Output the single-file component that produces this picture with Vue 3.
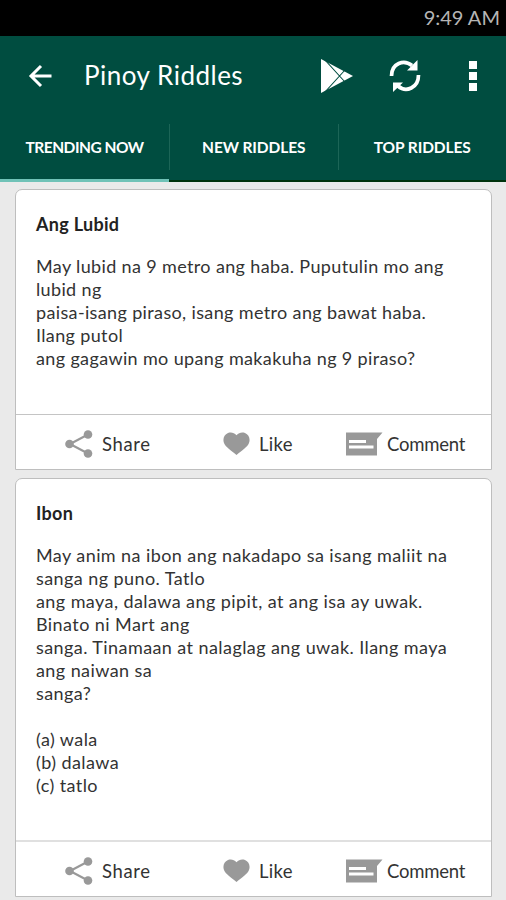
<template>
  <div class="screen">
    <div class="status-bar">9:49 AM</div>
    <header>
      <div class="toolbar">
        <svg class="back" width="24" height="24" viewBox="0 0 24 24">
          <path d="M13 2 L3 12 L13 22 M3 12 H23.500" fill="none" stroke="#fff" stroke-width="3" />
        </svg>
        <h1>Pinoy Riddles</h1>
        <svg class="play" width="34" height="34" viewBox="0 0 34 34">
          <path d="M1 0 L33 17 L1 34 Z" fill="#fff" />
          <path d="M4 0 L25 23 M4 34 L25 11" fill="none" stroke="#004d40" stroke-width="1.100" />
        </svg>
        <svg class="refresh" width="32" height="34" viewBox="0 0 32 34">
          <path d="M2.500 17 C2.500 4 15 0 23 6.500 M29.500 16 C29.500 29 17 34 9 27" fill="none" stroke="#fff" stroke-width="3.700" />
          <path d="M28.500 1 V11.500 H18 Z M4 33 V23.500 H14 Z" fill="#fff" />
        </svg>
        <svg class="more" width="8" height="30" viewBox="0 0 8 30">
          <path d="M0 0 H8 V8 H0 Z M0 11 H8 V19 H0 Z M0 22 H8 V30 H0 Z" fill="#fff" />
        </svg>
      </div>
      <nav class="tabs">
        <button
          v-for="tab in tabs"
          :key="tab"
          :class="{ active: tab === activeTab }"
          @click="activeTab = tab"
        >
          <span>{{ tab }}</span>
        </button>
      </nav>
    </header>
    <main>
      <article v-for="riddle in riddles" :key="riddle.id" class="card">
        <div class="card-body">
          <h2>{{ riddle.title }}</h2>
          <p>{{ riddle.text }}</p>
        </div>
        <div class="actions">
          <button class="share">
            <svg width="28" height="28" viewBox="0 0 28 28">
              <path d="M23 4.500 L5 14 L23 23.500" fill="none" stroke="#999" stroke-width="2.200" />
              <circle cx="23" cy="4.500" r="4.300" />
              <circle cx="4.500" cy="14" r="4.300" />
              <circle cx="23" cy="23.500" r="4.300" />
            </svg>
            <span>Share</span>
          </button>
          <button class="like" @click="riddle.liked = !riddle.liked">
            <svg width="27" height="24" viewBox="0 0 27 24">
              <path d="M13.500 3.200 C16 0.500 19 0 22 1 C26 2.500 27.500 7 26 11 C24.500 15 19 18.500 13.500 23 C8 18.500 2.500 15 1 11 C-0.500 7 1 2.500 5 1 C8 0 11 0.500 13.500 3.200 Z" />
            </svg>
            <span>Like</span>
          </button>
          <button class="comment">
            <svg width="37" height="24" viewBox="0 0 37 24">
              <path d="M0 0.500 H36.500 L31 7 V23.500 H0 Z" />
              <path d="M3 8 H20 V11 H3 Z M3 13.500 H27.500 V16.500 H3 Z" fill="#fff" />
            </svg>
            <span>Comment</span>
          </button>
        </div>
      </article>
    </main>
  </div>
</template>

<script setup>
import { ref } from "vue";

const tabs = ["TRENDING NOW", "NEW RIDDLES", "TOP RIDDLES"];
const activeTab = ref("TRENDING NOW");

const riddles = ref([
  {
    id: 1,
    title: "Ang Lubid",
    text: `May lubid na 9 metro ang haba. Puputulin mo ang
lubid ng
paisa-isang piraso, isang metro ang bawat haba.
Ilang putol
ang gagawin mo upang makakuha ng 9 piraso?`,
    liked: false,
  },
  {
    id: 2,
    title: "Ibon",
    text: `May anim na ibon ang nakadapo sa isang maliit na
sanga ng puno. Tatlo
ang maya, dalawa ang pipit, at ang isa ay uwak.
Binato ni Mart ang
sanga. Tinamaan at nalaglag ang uwak. Ilang maya
ang naiwan sa
sanga?

(a) wala
(b) dalawa
(c) tatlo`,
    liked: false,
  },
]);
</script>

<style>
body {
  background: #eaeaea;
}
</style>

<style scoped>
.screen {
  height: 900px;
  overflow: hidden;
  background: #eaeaea;
  font-family: "Choco cooky", Lato, sans-serif;
}

button {
  padding: 0;
  border: none;
  background: transparent;
  font-family: inherit;
  cursor: pointer;
}

.status-bar {
  height: 36px;
  line-height: 35px;
  padding-right: 6px;
  background: #000;
  color: #b5b5b5;
  font-size: 20px;
  text-align: right;
}

header {
  height: 146px;
  background: #004d40;
}

.toolbar {
  display: flex;
  align-items: center;
  height: 79px;
  padding: 0 29px 0 28px;
}

h1 {
  flex: 1;
  margin: 0 0 2px 32px;
  color: #fff;
  font-size: 26px;
  font-weight: 400;
  letter-spacing: 0.5px;
}

.refresh {
  margin: 0 48px 0 35px;
}

.tabs {
  display: flex;
  height: 67px;
}

.tabs button {
  flex: 1;
  padding: 9px 0 10px;
  border-bottom: 2px solid #00330d;
  color: #fff;
  font-size: 15.500px;
  font-weight: 700;
  letter-spacing: -0.1px;
  white-space: nowrap;
}

.tabs button.active {
  flex: 0 0 169px;
  padding-bottom: 9px;
  border-bottom: 3px solid #70c2b7;
  letter-spacing: -0.5px;
}

.tabs span {
  display: block;
  height: 46px;
  line-height: 46px;
}

.tabs button + button span {
  border-left: 1px solid #1c6557;
}

main {
  padding: 7px 14px 0 15px;
}

.card {
  margin-bottom: 8px;
  border: 1px solid #bebebe;
  border-radius: 7px 7px 0 0;
  background: #fff;
}

.card-body {
  padding: 22px 20px 44px;
}

h2 {
  margin: 0 0 19px;
  color: #222;
  font-size: 18px;
  font-weight: 700;
  line-height: 24px;
  letter-spacing: 0.3px;
}

p {
  margin: 0;
  color: #333;
  font-size: 18px;
  line-height: 23px;
  letter-spacing: 0.36px;
  white-space: pre;
}

.card + .card p {
  letter-spacing: 0.42px;
}

.card + .card .card-body {
  padding-bottom: 43px;
}

.actions {
  display: flex;
  height: 54px;
  padding-left: 49px;
  border-top: 1px solid #c4c4c4;
  align-items: center;
}

.card + .card .actions {
  border-top: 2px solid #e0e0e0;
}

.actions button {
  display: flex;
  align-items: center;
  gap: 9px;
  padding-top: 4px;
  color: #333;
  font-size: 18.500px;
}

.actions svg {
  fill: #999;
}

.actions .share {
  width: 158px;
  letter-spacing: 0.6px;
}

.actions .like {
  width: 123px;
  letter-spacing: 0.3px;
}

.actions .comment {
  gap: 4px;
  letter-spacing: -0.2px;
}
</style>
